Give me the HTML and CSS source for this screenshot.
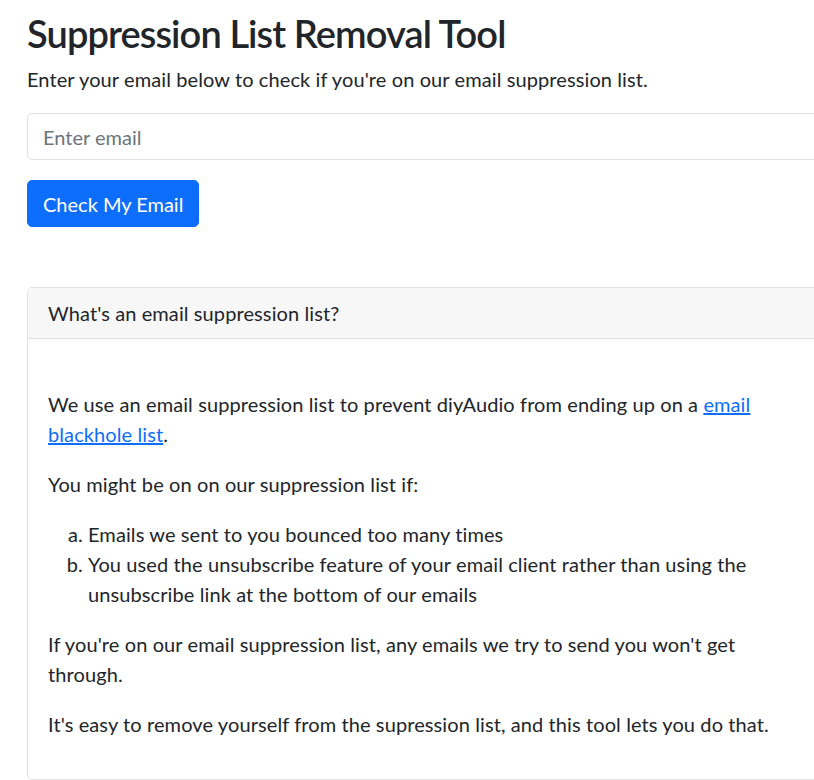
FILE: index.html
```html
<!DOCTYPE html>
<html lang="en">
<head>
<meta charset="utf-8">
<title>Suppression List Removal Tool</title>
<link rel="stylesheet" href="styles.css">
</head>
<body>
<div class="container">
  <h1 class="title">Suppression List Removal Tool</h1>
  <p class="intro">Enter your email below to check if you're on our email suppression list.</p>
  <form class="check-form">
    <input class="form-control" type="email" placeholder="Enter email">
    <button class="btn-primary" type="button">Check My Email</button>
  </form>
  <div class="card">
    <div class="card-header">What's an email suppression list?</div>
    <div class="card-body">
      <p>We use an email suppression list to prevent diyAudio from ending up on a <a href="#">email blackhole list</a>.</p>
      <p>You might be on on our suppression list if:</p>
      <ol class="reasons">
        <li>Emails we sent to you bounced too many times</li>
        <li>You used the unsubscribe feature of your email client rather than using the unsubscribe link at the bottom of our emails</li>
      </ol>
      <p>If you're on our email suppression list, any emails we try to send you won't get through.</p>
      <p>It's easy to remove yourself from the supression list, and this tool lets you do that.</p>
    </div>
  </div>
</div>
</body>
</html>
```

FILE: styles.css
```css
html, body {
  margin: 0;
  padding: 0;
  overflow-x: hidden;
  background: #fff;
}
body {
  font-family: Lato, "Liberation Sans", sans-serif;
  font-size: 20px;
  line-height: 30px;
  letter-spacing: 0.1px;
  color: #212529;
}
.container {
  width: 800px;
  padding: 6px 0 0 27px;
}
.title {
  font-size: 38px;
  line-height: 48px;
  font-weight: 600;
  letter-spacing: -0.9px;
  padding-top: 3px;
  margin: 0 0 7px 0;
}
.intro {
  margin: 0 0 19px 0;
}
.check-form {
  display: flex;
  flex-direction: column;
  align-items: flex-start;
  gap: 20px;
  margin-bottom: 60px;
}
.form-control {
  box-sizing: border-box;
  width: 100%;
  height: 47px;
  padding: 7px 15px;
  font: inherit;
  color: #212529;
  border: 1px solid #dee2e6;
  border-radius: 5px;
  outline: none;
}
.form-control::placeholder {
  color: #6c757d;
}
.btn-primary {
  height: 47px;
  padding: 7px 15px;
  font: inherit;
  color: #fff;
  background: #0d6efd;
  border: 1px solid #0d6efd;
  border-radius: 5px;
}
.card {
  border: 1px solid #dfe0e1;
  border-radius: 5px;
  overflow: hidden;
}
.card-header {
  padding: 10px 20px;
  background: #f7f7f7;
  border-bottom: 1px solid #dfe0e1;
}
.card-body {
  padding: 50px 20px 20px 20px;
}
.card-body p {
  margin: 0 0 20px 0;
}
.card-body a {
  color: #0d6efd;
}
.reasons {
  list-style-type: lower-alpha;
  margin: 0 0 20px 0;
  padding-left: 40px;
}
```
